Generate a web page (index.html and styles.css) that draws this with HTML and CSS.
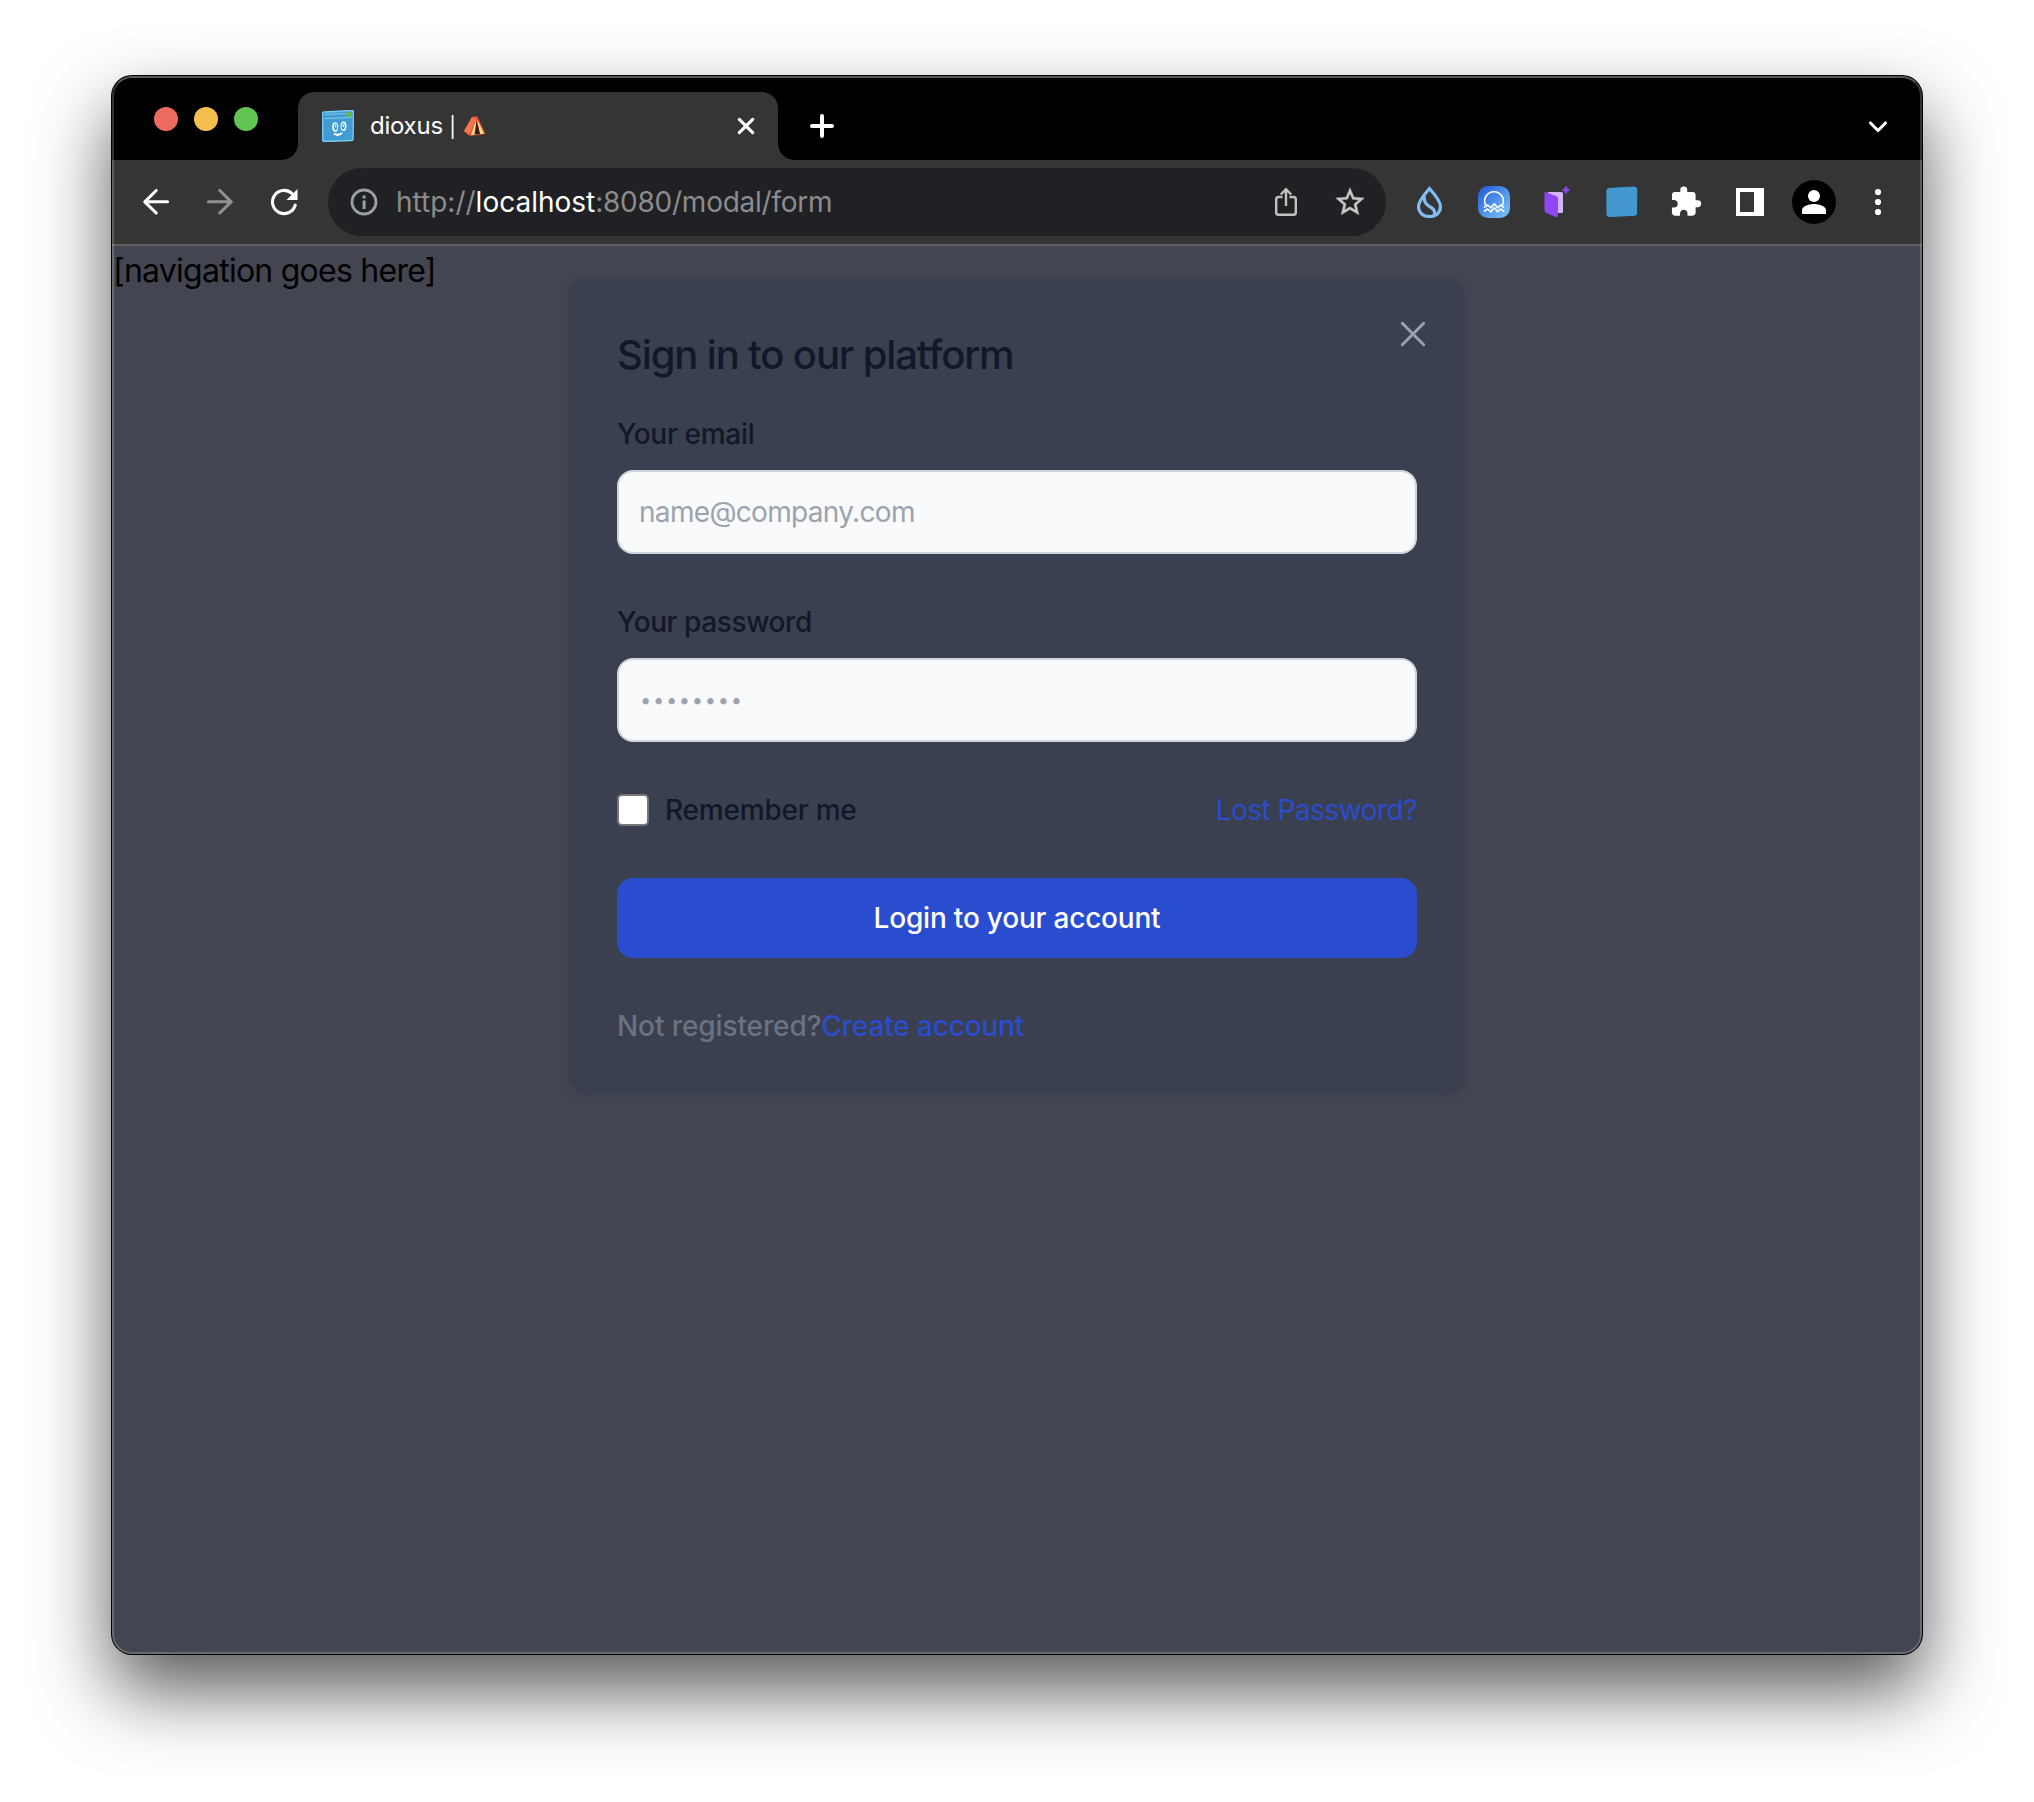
FILE: index.html
```html
<!DOCTYPE html>
<html lang="en">
<head>
<meta charset="utf-8">
<title>dioxus</title>
<link rel="stylesheet" href="styles.css">
</head>
<body>
<div class="window">
  <header class="tabstrip">
    <div class="lights"><i class="light red"></i><i class="light yellow"></i><i class="light green"></i></div>
    <div class="tab">
      <svg class="favicon" width="32" height="32" viewBox="0 0 32 32">
        <path d="M2 2 30 .5q1.500 0 1.500 1.500L31 29q0 1.500-1.500 1.500L2.500 31.500Q.8 31.500.8 30L.5 4Q.5 2 2 2Z" fill="#429bd3" stroke="#73c8ef" stroke-width="1.500"/>
        <path d="M3 4.500 24 3.500M3 8.500 30 7.500" stroke="#7acbf0" stroke-width="1.200"/>
        <path d="M24.500 2h5.500v5h-5.500z" fill="#62b74d"/>
        <ellipse cx="13.200" cy="17" rx="3" ry="4.800" fill="#fff"/><ellipse cx="21.500" cy="16.300" rx="2.900" ry="4.800" fill="#fff"/>
        <ellipse cx="13.600" cy="16.800" rx="1.700" ry="3.400" fill="#429bd3"/><ellipse cx="21.200" cy="16.300" rx="1.600" ry="3.400" fill="#429bd3"/>
        <ellipse cx="13.800" cy="16" rx=".7" ry="1.500" fill="#fff"/><ellipse cx="21.300" cy="15.500" rx=".7" ry="1.500" fill="#fff"/>
        <path d="M12 23.500q3.700 3 8-.5" fill="none" stroke="#fff" stroke-width="2"/>
      </svg>
      <span class="tab-title">dioxus <span class="bar">|</span></span>
      <svg class="tent" width="22" height="20" viewBox="0 0 22 20">
        <path d="M8 1 13 0 21.500 18 6 20 0 15Z" fill="#e5532d"/>
        <path d="M8 1 0 15l5 4 7-16Z" fill="#f0764b"/>
        <path d="M13 3 20 17.500 16 18Z" fill="#f9dc8c"/><path d="M12 4 7 19l5-.5Z" fill="#f9dc8c"/>
        <path d="M12.500 5 10.500 18.500 16 18Z" fill="#381a14"/>
      </svg>
      <svg class="tab-close" width="18" height="18" viewBox="0 0 18 18"><path d="M2.300 2.300 15.700 15.700M15.700 2.300 2.300 15.700" class="line"/></svg>
    </div>
    <svg class="plus" width="24" height="24" viewBox="0 0 24 24"><path d="M12 2v20M2 12h20" class="line thick"/></svg>
    <svg class="chevron" width="20" height="14" viewBox="0 0 20 14"><path d="M2.500 3 10 10.500 17.500 3" class="line"/></svg>
  </header>

  <div class="toolbar">
    <svg class="back" width="28" height="28" viewBox="0 0 28 28"><path d="M14.200 2.500 2.800 13.800 14.200 25M3 13.800h22.500" class="line"/></svg>
    <svg class="forward" width="28" height="28" viewBox="0 0 28 28"><path d="M13.800 2.500 25.200 13.800 13.800 25M25 13.800H2.500" class="line"/></svg>
    <svg class="reload" width="28" height="28" viewBox="0 0 28 28"><path d="M25.200 17.200A11.600 11.600 0 1 1 21.800 5.300" class="line"/><path d="M27.500 1v11H16.500Z" fill="#fff"/></svg>
    <div class="omnibox">
      <svg class="info" width="28" height="28" viewBox="0 0 28 28"><circle cx="14" cy="14" r="12" fill="none" stroke="#9aa0a6" stroke-width="2.800"/><path d="M12.600 12.500h3v8.500h-3zM12.600 7.500h3v3h-3z" fill="#9aa0a6"/></svg>
      <span class="url">http://<b>localhost</b><span class="path">:8080/modal/form</span></span>
      <svg class="share" width="24" height="30" viewBox="0 0 24 30"><g fill="none" stroke="#c1c1bf" stroke-width="2.400"><path d="M8.500 10H4.500Q2.200 10 2.200 12.300v13.200q0 2.300 2.300 2.300h15q2.300 0 2.300-2.300V12.300Q21.800 10 19.500 10h-4"/><path d="M12 19V3M6.800 7.500 12 2.300l5.200 5.200"/></g></svg>
      <svg class="star" width="30" height="30" viewBox="1.500 1.500 21 21"><path fill="#c7c7c5" stroke="#c7c7c5" stroke-width=".3" d="m22 9.240-7.190-.62L12 2 9.190 8.630 2 9.240l5.460 4.730L5.820 21 12 17.270 18.180 21l-1.630-7.030L22 9.240zM12 15.400l-3.760 2.270 1-4.280-3.320-2.880 4.380-.38L12 6.100l1.710 4.040 4.380.38-3.320 2.880 1 4.280L12 15.400z"/></svg>
    </div>
    <div class="extensions">
      <svg width="32" height="34" viewBox="0 0 32 34"><g fill="none" stroke="#80bdf0" stroke-width="3.200"><path d="M15.500 3.500Q4.500 16 4.500 21.500C4.500 28 9.500 31.500 15.500 31.500S26.500 28 26.500 21.500Q26.500 16 15.500 3.500Z"/><path d="M10 10.500c0 8 3 9.500 7 12 3.500 2 4.500 4.500 3 8"/></g></svg>
      <svg width="32" height="34" viewBox="0 0 32 34"><defs><linearGradient id="wave" x2="1" y2="1"><stop stop-color="#2157d9"/><stop offset="1" stop-color="#7ec9fb"/></linearGradient></defs><rect y="1" width="32" height="32" rx="10" fill="url(#wave)"/><g fill="none" stroke="#fff" stroke-width="1.600"><path d="M7.600 20A9.300 9.300 0 1 1 24.400 20"/><path d="m6 22.500 3.500-2.500 3.500 2.800 3.300-4 3.300 4 3-2.800 3.500 2.500M6 26.500l3.500-2.500 3.500 2.800 3.300-4 3.300 4 3-2.800 3.500 2.500" stroke-linejoin="round"/></g></svg>
      <svg width="32" height="34" viewBox="0 0 32 34"><path d="M6 7h13.500q1.500 0 1.500 1.500v18Q21 28 19.500 28H10Z" fill="#d0b5fb"/><path d="m3.500 7 11 4.200q1.500.6 1.500 2.300v17.300q0 2-2 1.200l-9.500-4Q2.500 27.300 2.500 25.500V7.500Q2.500 6.600 3.500 7Z" fill="#9146f5"/><path d="m24 1.500 1.100 2.400 2.400 1.100-2.400 1.100L24 8.500l-1.100-2.400L20.500 5l2.400-1.100Z" fill="#9146f5" stroke="#9146f5"/></svg>
      <svg width="32" height="34" viewBox="0 0 32 34"><path d="M2.500 3.500 28.500 2q2.300 0 2.300 2.300L30.500 28.500q0 1.700-1.700 1.800L3.200 31.500Q1 31.500 1 29.500L.9 5.200Q1 3.700 2.500 3.500Z" fill="#4497cf" stroke="#3d9fdb"/></svg>
      <svg width="32" height="32" viewBox=".6 .7 23 23"><path fill="#fff" d="M20.500 11H19V7c0-1.100-.9-2-2-2h-4V3.500a2.500 2.500 0 0 0-5 0V5H4c-1.100 0-1.990.9-1.990 2v3.800H3.500c1.490 0 2.700 1.210 2.700 2.700s-1.210 2.700-2.700 2.700H2V20c0 1.100.9 2 2 2h3.800v-1.500c0-1.490 1.210-2.700 2.700-2.700s2.700 1.210 2.700 2.700V22H17c1.100 0 2-.9 2-2v-4h1.500a2.500 2.500 0 0 0 0-5z"/></svg>
      <svg width="32" height="32" viewBox="0 0 32 32"><path fill="#fff" fill-rule="evenodd" d="M2 2h28v28H2zM6 6v20h14V6z"/></svg>
    </div>
    <svg class="avatar" width="44" height="44" viewBox="0 0 44 44"><circle cx="22" cy="22" r="22"/><circle cx="22" cy="16" r="6" fill="#fff"/><path fill="#fff" d="M10 34v-4c0-4 8-6 12-6s12 2 12 6v4z"/></svg>
    <svg class="menu" width="8" height="28" viewBox="0 0 8 28"><g fill="#fff"><circle cx="4" cy="4" r="3.100"/><circle cx="4" cy="14" r="3.100"/><circle cx="4" cy="24" r="3.100"/></g></svg>
  </div>

  <main class="page">
    <div class="nav">[navigation goes here]</div>
    <form class="card">
      <div class="card-head">
        <h3>Sign in to our platform</h3>
        <svg class="card-close" width="26" height="26" viewBox="0 0 26 26"><path d="M2.300 2.300 23.700 23.700M23.700 2.300 2.300 23.700" stroke="#9ca3af" stroke-width="2.900" stroke-linecap="round"/></svg>
      </div>
      <label class="label email" for="email">Your email</label>
      <input class="field" id="email" type="email" placeholder="name@company.com">
      <label class="label pass" for="password">Your password</label>
      <input class="field dots" id="password" type="password" placeholder="••••••••">
      <div class="options">
        <input class="check" id="remember" type="checkbox">
        <label class="remember" for="remember">Remember me</label>
        <a class="lost">Lost Password?</a>
      </div>
      <button class="login" type="button"><span>Login to your account</span></button>
      <div class="signup"><span>Not registered?</span><a>Create account</a></div>
    </form>
  </main>
</div>
</body>
</html>
```
FILE: styles.css
```css
* { box-sizing: border-box; }
html, body { margin: 0; background: #fff; }
body {
  height: 1802px;
  padding: 76px 112px 148px;
  font-family: Inter, "Liberation Sans", sans-serif;
  overflow: hidden;
}
svg { display: block; flex: none; }
.line { fill: none; stroke: #fff; stroke-width: 3.1; stroke-linecap: round; stroke-linejoin: round; }
.thick { stroke-width: 4; }

.window {
  position: relative;
  display: flex;
  flex-direction: column;
  width: 1810px;
  height: 1578px;
  border-radius: 20px;
  overflow: hidden;
  background: #434650;
  box-shadow: 0 0 0 1px #000, 0 36px 76px rgba(0, 0, 0, .66);
}
/* light rim over the window's edge */
.window::after {
  content: "";
  position: absolute;
  inset: 0;
  border: 2px solid rgba(255, 255, 255, .2);
  border-top-color: rgba(255, 255, 255, .34);
  border-radius: 20px;
  pointer-events: none;
}

.tabstrip { display: flex; height: 84px; padding-top: 16px; background: #000; }
.lights { display: flex; gap: 16px; width: 186px; padding: 15px 0 0 42px; }
.light { width: 24px; height: 24px; border-radius: 50%; }
.red { background: #ed6a5e; }
.yellow { background: #f5bf4f; }
.green { background: #61c554; }

.tab {
  position: relative;
  display: flex;
  align-items: center;
  width: 480px;
  height: 68px;
  padding: 0 23px 0 24px;
  border-radius: 16px 16px 0 0;
  background: #353535;
}
.tab::before, .tab::after {
  content: "";
  position: absolute;
  bottom: 0;
  width: 16px;
  height: 16px;
}
.tab::before { left: -16px; background: radial-gradient(circle at 0 0, #000 15.500px, #353535 16px); }
.tab::after { right: -16px; background: radial-gradient(circle at 100% 0, #000 15.500px, #353535 16px); }
.tab-title { width: 93px; margin-left: 16px; color: #fff; font-size: 24px; line-height: 30px; letter-spacing: -.25px; white-space: nowrap; }
.bar { font-size: 20px; }
.tent { margin-left: 1px; }
.tab-close { margin-left: auto; }
.plus { margin: 22px 0 0 32px; }
.chevron { margin: 28px 34px 0 auto; }

.toolbar {
  display: flex;
  align-items: center;
  height: 86px;
  padding: 0 40px 0 30px;
  background: #353535;
  border-bottom: 2px solid #5f5f5f;
}
.forward { margin-left: 36px; opacity: .45; }
.reload { margin-left: 36px; }
.omnibox {
  display: flex;
  align-items: center;
  width: 1058px;
  height: 68px;
  margin-left: 30px;
  padding: 0 21px 0 22px;
  border-radius: 34px;
  background: #202124;
}
.url { margin-left: 18px; color: #8c8c8c; font-size: 28px; line-height: 36px; white-space: nowrap; }
.url b { color: #fff; font-weight: 400; }
.path { letter-spacing: -.25px; }
.share { margin-left: auto; }
.star { margin-left: 37px; }
.extensions { display: flex; align-items: center; gap: 32px; margin-left: 28px; }
.avatar { margin-left: 26px; }
.menu { margin-left: auto; }

.page { position: relative; flex: 1; display: flex; justify-content: center; align-items: flex-start; padding-top: 32px; }
.nav { position: absolute; left: 1px; top: 1px; color: #000; font-size: 32px; line-height: 48px; letter-spacing: -.75px; white-space: nowrap; }
.card {
  display: flex;
  flex-direction: column;
  width: 896px;
  height: 816px;
  padding: 48px;
  border-radius: 16px;
  background: #3a404f;
  box-shadow: 0 2px 6px rgba(60, 60, 72, .45);
}
.card-head { display: flex; justify-content: space-between; height: 56px; }
.card-close { margin: -5px -9px 0 0; }
h3 { margin: 0; color: #111827; font-size: 40px; font-weight: 500; line-height: 58px; letter-spacing: -1.13px; white-space: nowrap; }
.label { height: 40px; color: #111827; font-size: 28px; font-weight: 500; line-height: 40px; align-self: flex-start; }
.email { margin-top: 32px; letter-spacing: -.3px; }
.pass { margin-top: 48px; letter-spacing: -.4px; }
.field {
  width: 800px;
  height: 84px;
  margin: 16px 0 0;
  padding: 0 20px;
  border: 2px solid #d1d5db;
  border-radius: 16px;
  background: #f9fafb;
  font-family: inherit;
  font-size: 28px;
  letter-spacing: -.68px;
}
.field::placeholder { color: #9ca3af; opacity: 1; }
.dots { padding-left: 21px; font-size: 20px; letter-spacing: 1.7px; }
.options { display: flex; align-items: center; height: 40px; margin-top: 48px; font-size: 28px; line-height: 40px; }
.check { appearance: none; width: 32px; height: 32px; margin: 0; border: 2px solid #767676; border-radius: 5px; background: #fff; }
.remember { margin-left: 16px; color: #111827; font-weight: 500; letter-spacing: -.2px; }
.lost { margin-left: auto; color: #2a4dd0; letter-spacing: -.5px; }
.login {
  height: 80px;
  margin-top: 48px;
  padding: 0;
  border: 0;
  border-radius: 16px;
  background: #2a4dd0;
  color: #fff;
  font: 500 28px/40px Inter, "Liberation Sans", sans-serif;
  letter-spacing: -.2px;
}
.signup { margin-top: 48px; color: #6b7280; font-size: 28px; font-weight: 500; line-height: 40px; letter-spacing: -.1px; }
.signup a { color: #2a4dd0; letter-spacing: -.15px; }
```
